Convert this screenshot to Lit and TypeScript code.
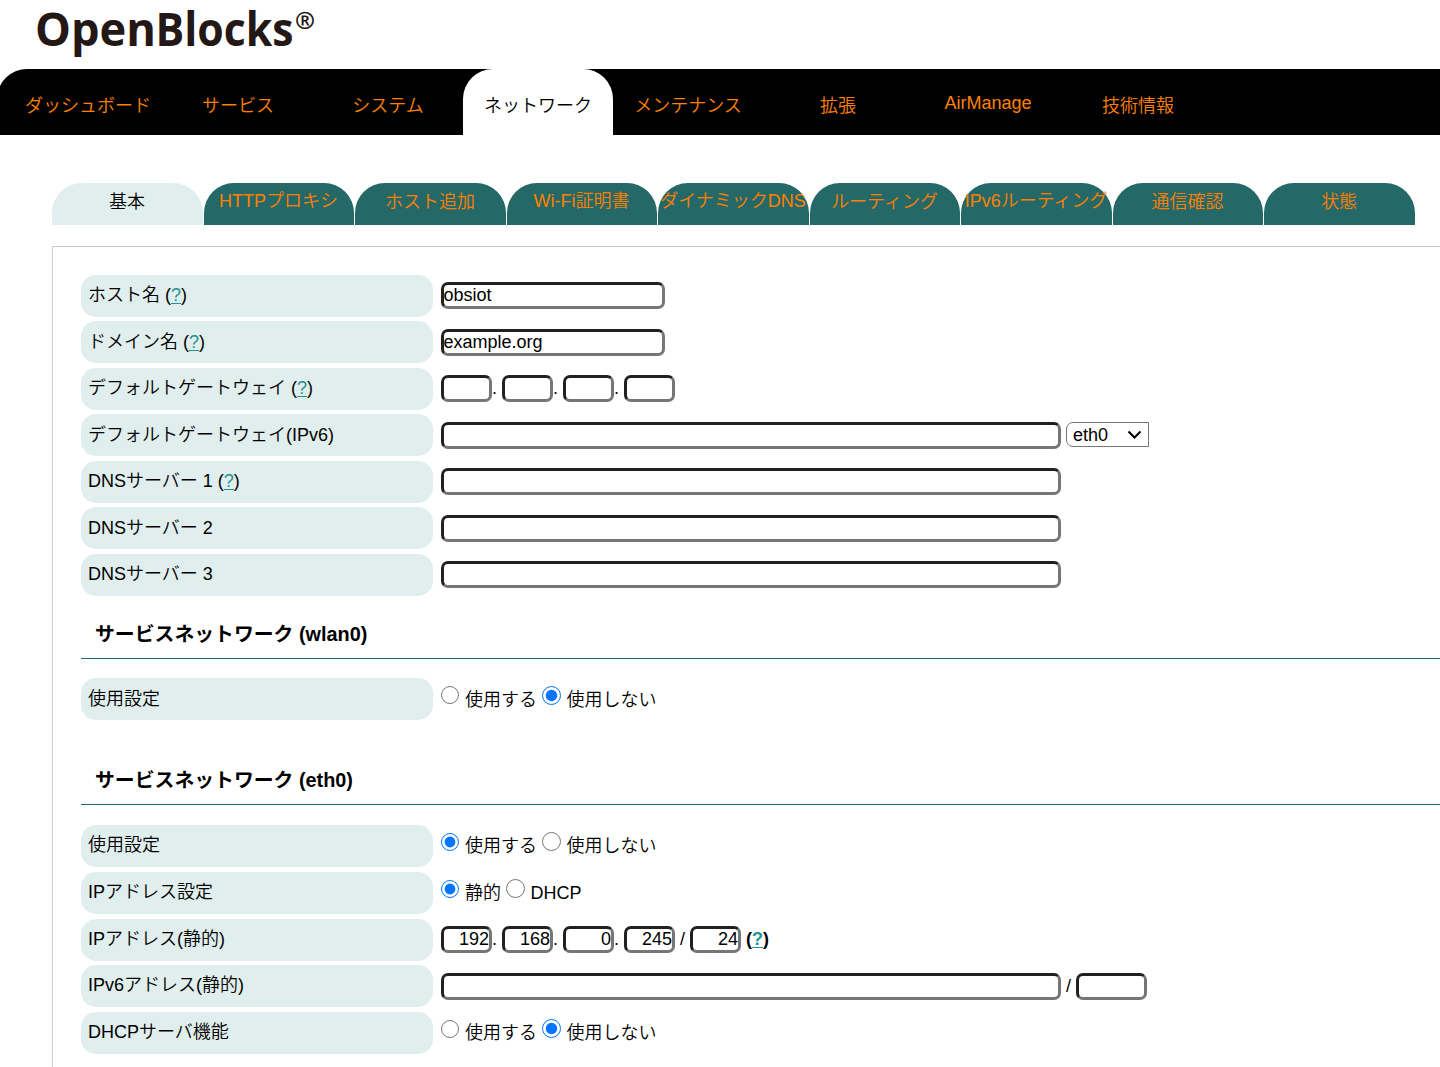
import { LitElement, html, css, nothing, TemplateResult } from "lit";
import { customElement } from "lit/decorators.js";
import { classMap } from "lit/directives/class-map.js";

const MAIN_TABS = ["ダッシュボード", "サービス", "システム", "ネットワーク", "メンテナンス", "拡張", "AirManage", "技術情報"];
const SUB_TABS = ["基本", "HTTPプロキシ", "ホスト追加", "Wi-Fi証明書", "ダイナミックDNS", "ルーティング", "IPv6ルーティング", "通信確認", "状態"];

@customElement("app-root")
export class AppRoot extends LitElement {
  static styles = css`
    :host {
      display: block;
      width: 1440px;
      height: 1067px;
      overflow: hidden;
      background: #fff;
      color: #000;
      font: 350 18px/24px "Liberation Sans", "Noto Sans CJK JP", sans-serif;
    }
    * { box-sizing: border-box; }
    .page { display: flex; flex-direction: column; height: 1067px; overflow: hidden; }
    .logo { display: block; flex: none; width: 340px; height: 69px; overflow: visible; }
    .logo text { font-family: "Open Sans", sans-serif; font-weight: 700; fill: #231815; }
    .main {
      display: flex;
      flex: none;
      height: 66px;
      margin-left: -3px;
      padding-left: 16px;
      background: #000;
      border-top-left-radius: 30px;
    }
    .main-tab {
      width: 150px;
      padding-top: 25px;
      text-align: center;
      white-space: nowrap;
      color: #ff8000;
      border-radius: 30px 30px 0 0;
    }
    .main-tab.latin { padding-top: 22px; }
    .main-tab.active { background: #fff; color: #000; }
    .sub { display: flex; flex: none; gap: 1px; margin: 48px 0 0 52px; width: 1362.6px; height: 42px; }
    .sub-tab {
      display: flex;
      flex: 1 1 0;
      min-width: 0;
      justify-content: center;
      padding: 7px 0.5px 0 0;
      white-space: nowrap;
      color: #ff8000;
      background: #246868;
      border-radius: 30px 30px 0 0;
    }
    .sub-tab.latin { padding-top: 6px; }
    .sub-tab.active { background: #e0eeed; color: #000; }
    .panel {
      flex: none;
      height: 900px;
      margin: 21px -10px 0 52px;
      padding: 28px 0 0 28px;
      border: 1px solid #ccc;
    }
    .rows { display: flex; flex-direction: column; gap: 4.45px; }
    .rows.wide { gap: 4.7px; }
    .row { display: flex; height: 42px; }
    .label {
      width: 352px;
      margin-right: 8px;
      padding: 8.35px 7px 0;
      border-radius: 15px;
      background: #e0eeed;
      white-space: pre;
    }
    .wide .label { padding-top: 8.17px; }
    a { color: #219292; text-decoration: underline; text-underline-offset: 2px; text-decoration-thickness: 1px; text-decoration-skip-ink: none; }
    .fields { display: flex; padding-top: 7.38px; white-space: pre; }
    .wide .fields { padding-top: 7.3px; }
    .box {
      width: 51px;
      height: 27px;
      margin: 0;
      padding: 0;
      border: 3px solid;
      border-color: #212121 #767676 #767676 #212121;
      border-radius: 7px;
      background: #fff;
      color: #000;
      font: inherit;
      line-height: 20px;
      outline: none;
    }
    .box.num { text-align: right; }
    .box.name { width: 224px; text-indent: -0.5px; }
    .box.long { width: 620px; }
    .box.prefix { width: 71px; }
    .dot { width: 10px; padding-top: 1px; }
    .slash { width: 15px; padding: 1px 0 0 5px; }
    .help { padding: 1px 0 0 5px; font-weight: 700; }
    .select {
      display: flex;
      justify-content: space-between;
      align-items: center;
      width: 83px;
      height: 25px;
      margin-left: 5px;
      padding: 1px 6px 0;
      border: 1px solid #767676;
      border-radius: 7px 0 0 7px;
    }
    .radio {
      flex: none;
      width: 18px;
      height: 18px;
      margin: 0.7px 6px 0 0;
      accent-color: #0075ff;
    }
    .radio.second { width: 19px; height: 19px; margin: 0.3px 5px 0 5.4px; }
    .wide .radio.second { margin-top: -0.2px; }
    .option { padding-top: 2px; }
    .wide .option { padding-top: 1.7px; }
    .heading {
      height: 43px;
      margin: 0 0 20px;
      padding: 5px 0 0 14px;
      border-bottom: 1px solid #246868;
      font-size: 19.85px;
      font-weight: 700;
      line-height: 27px;
      white-space: pre;
    }
    .heading.wlan { margin-top: 20.6px; margin-bottom: 19px; }
    .heading.eth { margin-top: 42px; }
  `;

  private row(label: string, fields: TemplateResult, help = false) {
    return html`<div class="row">
      <div class="label">${label}${help ? html` (<a>?</a>)` : nothing}</div>
      <div class="fields">${fields}</div>
    </div>`;
  }

  private box(kind: string, value = "") {
    return html`<input class="box ${kind}" type="text" .value=${value} />`;
  }

  private address(parts: string[]) {
    return parts.map((p, i) => html`${i ? html`<span class="dot">.</span>` : nothing}${this.box("num", p)}`);
  }

  private radios(name: string, first: string, second: string, selected: number) {
    return html`<input class="radio" type="radio" name=${name} ?checked=${selected === 0} /><span class="option">${first}</span><input class="radio second" type="radio" name=${name} ?checked=${selected === 1} /><span class="option">${second}</span>`;
  }

  render() {
    return html`<div class="page">
      <svg class="logo" viewBox="0 0 340 69">
        <text y="46" font-size="46"><tspan x="35" textLength="121" lengthAdjust="spacingAndGlyphs">Open</tspan><tspan x="155.5" textLength="138" lengthAdjust="spacingAndGlyphs">Blocks</tspan></text>
        <text x="295" y="28.5" font-size="24" textLength="20" lengthAdjust="spacingAndGlyphs">®</text>
      </svg>
      <nav class="main">
        ${MAIN_TABS.map((t, i) => html`<div class=${classMap({ "main-tab": true, active: i === 3, latin: i === 6 })}>${t}</div>`)}
      </nav>
      <nav class="sub">
        ${SUB_TABS.map((t, i) => html`<div class=${classMap({ "sub-tab": true, active: i === 0, latin: /[A-Z]/.test(t) })}>${t}</div>`)}
      </nav>
      <main class="panel">
        <div class="rows">
          ${this.row("ホスト名", this.box("name", "obsiot"), true)}
          ${this.row("ドメイン名", this.box("name", "example.org"), true)}
          ${this.row("デフォルトゲートウェイ", html`${this.address(["", "", "", ""])}`, true)}
          ${this.row("デフォルトゲートウェイ(IPv6)", html`${this.box("long")}<div class="select"><span>eth0</span><svg width="15" height="10" viewBox="0 0 15 10"><path d="M1.5 1.5 L7.5 7.5 L13.5 1.5" fill="none" stroke="#000" stroke-width="2" /></svg></div>`)}
          ${this.row("DNSサーバー 1", this.box("long"), true)}
          ${this.row("DNSサーバー 2", this.box("long"))}
          ${this.row("DNSサーバー 3", this.box("long"))}
        </div>
        <h3 class="heading wlan">サービスネットワーク (wlan0)</h3>
        <div class="rows">${this.row("使用設定", this.radios("wlan", "使用する", "使用しない", 1))}</div>
        <h3 class="heading eth">サービスネットワーク (eth0)</h3>
        <div class="rows wide">
          ${this.row("使用設定", this.radios("eth", "使用する", "使用しない", 0))}
          ${this.row("IPアドレス設定", this.radios("mode", "静的", "DHCP", 0))}
          ${this.row("IPアドレス(静的)", html`${this.address(["192", "168", "0", "245"])}<span class="slash">/</span>${this.box("num", "24")}<span class="help">(<a>?</a>)</span>`)}
          ${this.row("IPv6アドレス(静的)", html`${this.box("long")}<span class="slash">/</span>${this.box("prefix")}`)}
          ${this.row("DHCPサーバ機能", this.radios("dhcp", "使用する", "使用しない", 1))}
        </div>
      </main>
    </div>`;
  }
}
